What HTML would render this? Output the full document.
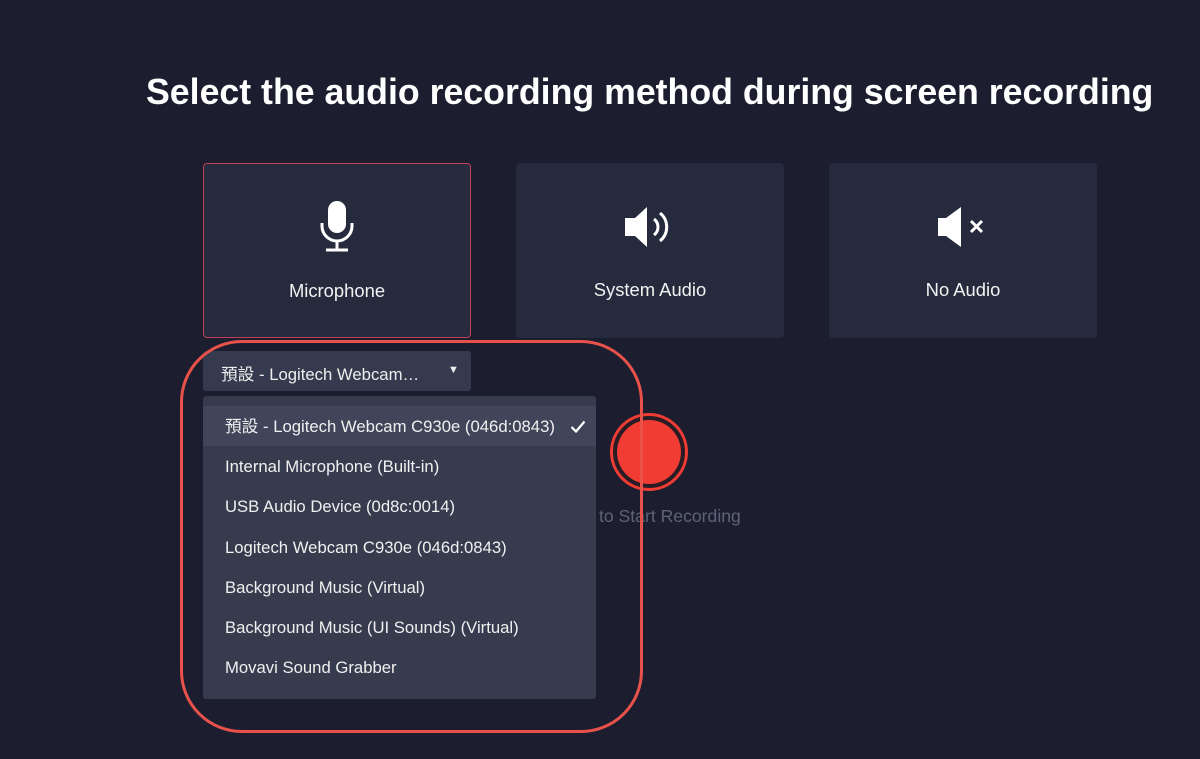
<!DOCTYPE html>
<html><head><meta charset="utf-8"><style>
html,body{margin:0;padding:0;width:1200px;height:759px;overflow:hidden;background:#1c1e30;font-family:"Liberation Sans","Noto Sans CJK TC",sans-serif;color:#fff;position:relative}
h1{position:absolute;left:146px;top:72px;margin:0;font-size:35.7px;font-weight:bold;white-space:nowrap}
.card{position:absolute;top:163px;width:268px;height:175px;background:#262a3d;border-radius:4px;box-sizing:border-box}
.card .lbl{position:absolute;top:116px;left:0;right:0;text-align:center;font-size:18.4px;color:#f2f2f2}
.card svg{position:absolute;left:50%;top:38px;transform:translateX(-50%)}
.sel{position:absolute;left:203px;top:351px;width:268px;height:40px;background:#363a4e;border-radius:3px;font-size:16.7px;color:#eee}
.menu{position:absolute;left:203px;top:396px;width:393px;height:303px;background:#373b4e;border-radius:3px}
.item{height:40.3px;line-height:42px;padding-left:22px;font-size:16.7px;color:#f0f0f0}
.item.on{background:#41455a;margin-top:10px;height:40px;position:relative}
.rec{position:absolute;left:610px;top:413px;width:78px;height:78px;border-radius:50%;background:#2a1c25;box-sizing:border-box;border:3px solid #f03c32}
.rec:after{content:"";position:absolute;left:4px;top:4px;right:4px;bottom:4px;border-radius:50%;background:#f03c32}
.hint{position:absolute;left:599px;top:506px;font-size:17.6px;color:#5f6376}
.ann{position:absolute;left:180px;top:340px;width:463px;height:393px;border:3px solid #e9524a;border-radius:62px;box-sizing:border-box}
</style></head><body>
<h1>Select the audio recording method during screen recording</h1>
<div class="card" style="left:203px;border:1px solid #c0405a">
<svg width="40" height="54" viewBox="0 0 40 54" style="top:36px"><rect x="11" y="1" width="18" height="32" rx="9" fill="#fff"/><path d="M5 23v3a15 15 0 0 0 30 0v-3" stroke="#fff" stroke-width="3" fill="none"/><path d="M20 41v8M9 50h22" stroke="#fff" stroke-width="3"/></svg>
<div class="lbl">Microphone</div></div>
<div class="card" style="left:516px">
<svg width="52" height="44" viewBox="0 0 52 44" style="top:42px"><path d="M1 13h10L23 2v40L11 31H1z" fill="#fff"/><path d="M30 14a10 10 0 0 1 0 16" stroke="#fff" stroke-width="3" fill="none"/><path d="M36 8a18 18 0 0 1 0 28" stroke="#fff" stroke-width="3" fill="none"/></svg>
<div class="lbl">System Audio</div></div>
<div class="card" style="left:829px">
<svg width="56" height="44" viewBox="0 0 56 44" style="top:42px"><path d="M3 13h8L26 2v40L11 31H3z" fill="#fff"/><path d="M36 16l11 11M47 16L36 27" stroke="#fff" stroke-width="3"/></svg>
<div class="lbl">No Audio</div></div>
<div class="sel"><span style="position:absolute;left:18px;top:10px">預設 - Logitech Webcam…</span><span style="position:absolute;left:245px;top:13px;font-size:11px">▼</span></div>
<div class="rec"></div>
<div class="hint">to Start Recording</div>
<div class="menu">
<div class="item on">預設 - Logitech Webcam C930e (046d:0843)<svg style="position:absolute;left:367px;top:14px" width="16" height="13" viewBox="0 0 16 13"><path d="M1.5 7l4.5 4.5L14.5 1.5" stroke="#fff" stroke-width="2.2" fill="none"/></svg></div>
<div class="item">Internal Microphone (Built-in)</div>
<div class="item">USB Audio Device (0d8c:0014)</div>
<div class="item">Logitech Webcam C930e (046d:0843)</div>
<div class="item">Background Music (Virtual)</div>
<div class="item">Background Music (UI Sounds) (Virtual)</div>
<div class="item">Movavi Sound Grabber</div>
</div>
<div class="ann"></div>
</body></html>
